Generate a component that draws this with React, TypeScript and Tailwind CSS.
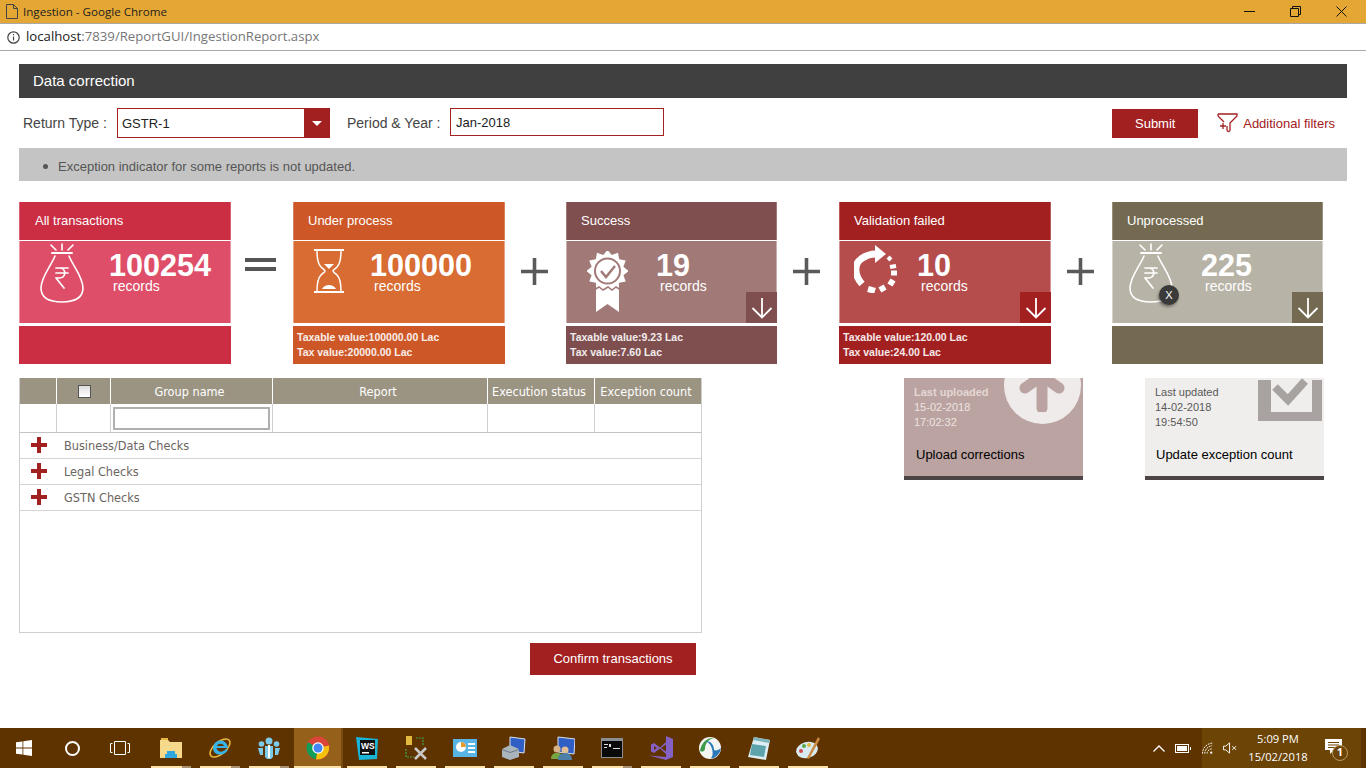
import { useState } from "react";

const arial = "font-['Liberation_Sans',Arial,sans-serif]";
const tahoma = "font-['DejaVu_Sans_Condensed','DejaVu_Sans',sans-serif]";
const segoe = "font-['Open_Sans','Noto_Sans',sans-serif]";

function BagIcon() {
  return (
    <svg width="44" height="60" viewBox="0 0 44 60" fill="none" stroke="white" strokeWidth="1.6" strokeLinecap="round">
      <path d="M11 2l5 5M22 1v6M33 2l-5 5" />
      <path d="M12 10h20" strokeWidth="2" />
      <path d="M15 13C11 23 1 34 1 45c0 10 9 14 21 14s21-4 21-14c0-11-10-22-14-32" />
      <path d="M16 25h12M16 30h12M16 35h3.5c7 0 7-10 0-10M16 35l8 10" strokeWidth="1.7" />
    </svg>
  );
}

function HourglassIcon() {
  return (
    <svg width="32" height="46" viewBox="0 0 32 46" fill="none" stroke="white" strokeWidth="1.5">
      <path d="M1 2h30M1 44h30" strokeWidth="2" />
      <path d="M4 3c0 9 1 13 4 16 2 2 4 3 4 4s-2 2-4 4c-3 3-4 7-4 16M28 3c0 9-1 13-4 16-2 2-4 3-4 4s2 2 4 4c3 3 4 7 4 16" />
      <path d="M11 16h10l-5 5z" fill="white" stroke="none" />
      <path d="M9 41c2-3 4-4 7-4s5 1 7 4z" fill="white" stroke="none" />
    </svg>
  );
}

function burst(cx: number, cy: number, r1: number, r2: number, n: number) {
  const pts: string[] = [];
  for (let i = 0; i < n * 2; i++) {
    const a = (Math.PI * i) / n - Math.PI / 2;
    const r = i % 2 ? r2 : r1;
    pts.push(`${(cx + r * Math.cos(a)).toFixed(1)},${(cy + r * Math.sin(a)).toFixed(1)}`);
  }
  return pts.join(" ");
}

function MedalIcon() {
  return (
    <svg width="41" height="62" viewBox="0 0 41 62">
      <path d="M9 34h23v27l-11.500-8L9 61z" fill="white" />
      <polygon points={burst(20.5, 20, 21, 16.5, 12)} fill="white" />
      <path d="M7 39l5-3 4 3 5-3 4 3 4-3 5 3" fill="none" stroke="#A17A78" strokeWidth="1.5" />
      <circle cx="20.5" cy="20" r="12.5" fill="none" stroke="#A17A78" strokeWidth="2" />
      <path d="M14 20l5 6 9-11" fill="none" stroke="#A17A78" strokeWidth="2.5" />
    </svg>
  );
}

function ProgressIcon() {
  return (
    <svg width="44" height="48" viewBox="0 0 44 48" fill="none" stroke="white" strokeWidth="7">
      <path d="M8 39C0 30 0 19 7 14c4-3 8-5 15-5" />
      <path d="M21 0l11 9-11 9z" fill="white" stroke="none" />
      <path d="M34 15l3-3" strokeWidth="4" />
      <path d="M36 22l6-1" strokeWidth="4" />
      <path d="M37 28h6" strokeWidth="5" />
      <path d="M35 36l5 3" strokeWidth="6" />
      <path d="M27 41l3 5" strokeWidth="6" />
      <path d="M14 44l7 2" strokeWidth="6" />
    </svg>
  );
}

function ArrowBox({ bg }: { bg: string }) {
  return (
    <div className={`absolute right-0 bottom-0 flex h-[31px] w-[31px] items-center justify-center ${bg}`}>
      <svg width="22" height="22" viewBox="0 0 22 22" fill="none" stroke="white" strokeWidth="1.8">
        <path d="M11 1v19M1.500 11l9.500 9.500 9.500-9.500" />
      </svg>
    </div>
  );
}

const cards = [
  {
    title: "All transactions", count: "100254", head: "bg-[#CB2D43]", body: "bg-[#DE4E69]", width: "w-[212px]", titlePad: "pl-[16px]",
    icon: <BagIcon />, iconBox: "w-[90px] pl-[21px] pt-[2px]", taxable: "", tax: "", arrow: false,
  },
  {
    title: "Under process", count: "100000", head: "bg-[#CD5726]", body: "bg-[#D86C33]", width: "w-[212px]", titlePad: "pl-[15px]",
    icon: <HourglassIcon />, iconBox: "w-[77px] pl-[20px] pt-[7px]", taxable: "Taxable value:100000.00 Lac", tax: "Tax value:20000.00 Lac", arrow: false,
  },
  {
    title: "Success", count: "19", head: "bg-[#7F4E4E]", body: "bg-[#A17A78]", width: "w-[211px]", titlePad: "pl-[15px]",
    icon: <MedalIcon />, iconBox: "w-[90px] pl-[21px] pt-[10px]", taxable: "Taxable value:9.23 Lac", tax: "Tax value:7.60 Lac", arrow: true,
  },
  {
    title: "Validation failed", count: "10", head: "bg-[#A32020]", body: "bg-[#B54D4D]", width: "w-[212px]", titlePad: "pl-[15px]",
    icon: <ProgressIcon />, iconBox: "w-[78px] pl-[15px] pt-[4px]", taxable: "Taxable value:120.00 Lac", tax: "Tax value:24.00 Lac", arrow: true,
  },
  {
    title: "Unprocessed", count: "225", head: "bg-[#736A51]", body: "bg-[#B8B3A7]", width: "w-[211px]", titlePad: "pl-[15px]",
    icon: <BagIcon />, iconBox: "w-[89px] pl-[17px] pt-[2px]", taxable: "", tax: "", arrow: true,
  },
];

function Card({ card }: { card: (typeof cards)[number] }) {
  return (
    <div className={`flex shrink-0 flex-col ${card.width}`}>
      <div className={`flex h-[38px] items-center text-[13px] text-white shadow-[inset_1px_0_0_#ffffff40,inset_-1px_0_0_#ffffff40] ${card.titlePad} ${card.head}`}>{card.title}</div>
      <div className="h-px bg-white/70" />
      <div className={`relative flex h-[82px] shadow-[inset_1px_0_0_#ffffff66,inset_-1px_0_0_#ffffff66] ${card.body}`}>
        <div className={`relative shrink-0 ${card.iconBox}`}>
          {card.icon}
          {card.title === "Unprocessed" && (
            <span className="absolute top-[44px] left-[47px] flex h-5 w-5 items-center justify-center rounded-full bg-[#3a3a3a] text-[11px] text-white shadow-[-1px_2px_3px_rgba(0,0,0,0.4)]">
              X
            </span>
          )}
        </div>
        <div className="pt-[11px] text-white">
          <div className="text-[30.6px] leading-[26px] font-bold">{card.count}</div>
          <div className="ml-[4px] text-[14px] leading-[16px]">records</div>
        </div>
        {card.arrow && <ArrowBox bg={card.head} />}
      </div>
      <div className={`mt-[3px] flex h-[38px] flex-col justify-center pl-[4px] text-[10.5px] leading-[15px] font-bold text-white/90 ${card.head}`}>
        <div>{card.taxable}</div>
        <div>{card.tax}</div>
      </div>
    </div>
  );
}

function PlusOp({ w }: { w: string }) {
  return (
    <div className={`flex h-[138px] shrink-0 items-center justify-center pr-[3px] ${w}`}>
      <svg width="27" height="27" viewBox="0 0 27 27" fill="#5a5a5a">
        <path d="M11.700 0h3.600v11.700H27v3.600H15.300V27h-3.600V15.300H0v-3.600h11.700z" />
      </svg>
    </div>
  );
}

function Funnel() {
  return (
    <svg width="21" height="20" viewBox="0 0 21 20" fill="none" stroke="#A32020" strokeWidth="1.3">
      <path d="M1 1h19v2l-7 7v7c0 2-3 2-3 0v-4" />
      <path d="M1 3l6 6M1 1v2M3 13h6M6 10v6" />
    </svg>
  );
}

const headers = ["", "", "Group name", "Report", "Execution status", "Exception count"];
const groups = ["Business/Data Checks", "Legal Checks", "GSTN Checks"];

function GridTable() {
  const [checked, setChecked] = useState(false);
  return (
    <div className={`h-[255px] w-[683px] shrink-0 border-r border-b border-l border-[#cfcfcf] text-[12.600px] ${tahoma}`}>
      <div className="grid h-[26px] grid-cols-[37px_54px_162px_215px_107px_1fr] bg-[#9C9483] text-white">
        {headers.map((h, i) => (
          <div key={i} className="flex items-center justify-center border-r border-white pt-[2px] pr-[4px] last:border-r-0">
            {i === 1 ? (
              <input
                type="checkbox"
                checked={checked}
                onChange={() => setChecked(!checked)}
                className="mb-[2px] ml-[5px] h-[13px] w-[13px] appearance-none border border-[#555] bg-gradient-to-b from-[#ddd] to-white"
              />
            ) : (
              h
            )}
          </div>
        ))}
      </div>
      <div className="grid h-[29px] grid-cols-[37px_54px_162px_215px_107px_1fr] border-b border-[#c4c4c4]">
        {headers.map((_, i) => (
          <div key={i} className="flex items-center justify-center border-r border-[#cfcfcf] last:border-r-0">
            {i === 2 && <input className="h-[23px] w-[157px] border-2 border-[#b0b0b0] bg-white" />}
          </div>
        ))}
      </div>
      {groups.map((g) => (
        <div key={g} className="flex h-[26px] items-center border-b border-[#d4d4d4] text-[#6b655f]">
          <svg width="16" height="16" viewBox="0 0 16 16" fill="#A32020" className="mr-[17px] mb-[2px] ml-[11px]">
            <path d="M6 0h4v6h6v4h-6v6H6v-6H0V6h6z" />
          </svg>
          <span className="pt-[1px]">{g}</span>
        </div>
      ))}
    </div>
  );
}

function UploadTile() {
  return (
    <div className="relative h-[102px] w-[179px] overflow-hidden border-b-4 border-[#4B4545] bg-[#BAA3A0]">
      <div className="absolute top-[-31px] left-[100px] h-[77px] w-[77px] rounded-full bg-[#EFEBEA]" />
      <svg width="56" height="34" viewBox="0 0 56 34" fill="none" stroke="#BAA3A0" strokeLinecap="round" className="absolute top-0 left-[110px]">
        <path d="M28 4v26" strokeWidth="11" />
        <path d="M11 10L28 -2 45 10" strokeWidth="11" />
      </svg>
      <div className="pt-[7px] pl-[10px] text-[11px] leading-[15px] text-[#EFE3E1]">
        <div className="font-bold opacity-80">Last uploaded</div>
        <div>15-02-2018</div>
        <div>17:02:32</div>
      </div>
      <div className="pt-[17px] pl-[12px] text-[13px] leading-[16px] text-black">Upload corrections</div>
    </div>
  );
}

function UpdateTile() {
  return (
    <div className="relative h-[102px] w-[179px] overflow-hidden border-b-4 border-[#4B4545] bg-[#EFEEEC]">
      <svg width="64" height="43" viewBox="0 0 64 43" className="absolute top-0 left-[113px]">
        <path d="M0 2h13v32h41V2h10v41H0z" fill="#A8A3A0" />
        <path d="M17 9l13 13 17-19" fill="none" stroke="#A8A3A0" strokeWidth="8" />
      </svg>
      <div className="pt-[7px] pl-[10px] text-[11px] leading-[15px] text-[#595959]">
        <div>Last updated</div>
        <div>14-02-2018</div>
        <div>19:54:50</div>
      </div>
      <div className="pt-[17px] pl-[11px] text-[13px] leading-[16px] text-black">Update exception count</div>
    </div>
  );
}

const slots: { kind: "open" | "split" | "active"; icon: React.ReactNode }[] = [
  {
    kind: "split",
    icon: (
      <svg width="22" height="20" viewBox="0 0 22 20">
        <path d="M0 2h8l2 2h12v16H0z" fill="#F6D98B" />
        <path d="M1 0h7v2H1z" fill="#E8B93F" />
        <path d="M7 13h8v3h2v4H5v-4h2z" fill="#31A7DF" />
      </svg>
    ),
  },
  {
    kind: "split",
    icon: (
      <svg width="24" height="24" viewBox="0 0 24 24" fill="none">
        <ellipse cx="12" cy="12" rx="12" ry="6" transform="rotate(-40 12 12)" stroke="#E8B93F" strokeWidth="1.5" />
        <path d="M5 12a7.500 7.500 0 0 1 15 0H8.500c.5 4 6 5 9 1.500h2.500C17 21 5 20 5 12zm4-2h7c-1-3-6-3-7 0z" fill="#36B4E8" fillRule="evenodd" />
      </svg>
    ),
  },
  {
    kind: "split",
    icon: (
      <svg width="24" height="24" viewBox="0 0 24 24" fill="#7CCBEA">
        <circle cx="12" cy="5" r="3.5" />
        <circle cx="4.5" cy="8" r="2.8" />
        <circle cx="19.5" cy="8" r="2.8" />
        <path d="M8 10h8v11l-2 2h-4l-2-2zM1 12h5v7H3zM18 12h5l-2 7h-3z" />
        <path d="M11 9h2v13h-2z" fill="#fff" />
      </svg>
    ),
  },
  {
    kind: "active",
    icon: (
      <svg width="24" height="24" viewBox="0 0 24 24">
        <circle cx="12" cy="12" r="11.5" fill="#DB4437" />
        <path d="M12 12L2 6.200A11.500 11.500 0 0 0 10 23.300z" fill="#0F9D58" />
        <path d="M12 12l10.800-2.500A11.500 11.500 0 0 1 10 23.300z" fill="#F4C20D" />
        <circle cx="12" cy="12" r="5.8" fill="#fff" />
        <circle cx="12" cy="12" r="4.5" fill="#4285F4" />
      </svg>
    ),
  },
  {
    kind: "open",
    icon: (
      <svg width="24" height="24" viewBox="0 0 24 24">
        <path d="M1 1l22 2-1 20-18 1z" fill="#19B5D8" />
        <path d="M5 4h15v15H5z" fill="#111" />
        <path d="M7 16h7v1.500H7z" fill="#fff" />
        <text x="6" y="13" fontSize="8.500" fontWeight="700" fill="#fff" fontFamily="Liberation Sans, sans-serif">WS</text>
      </svg>
    ),
  },
  {
    kind: "open",
    icon: (
      <svg width="24" height="24" viewBox="0 0 24 24" fill="none">
        <path d="M2 0h6v9H2z" fill="#E3B93F" />
        <path d="M12 2h7v7M2 13v8h8" stroke="#3FA34D" strokeWidth="1.2" strokeDasharray="2 1" />
        <path d="M11 12l11 11M22 12L11 23" stroke="#C9C9C9" strokeWidth="2.5" />
      </svg>
    ),
  },
  {
    kind: "open",
    icon: (
      <svg width="24" height="20" viewBox="0 0 24 20">
        <path d="M0 1h24v18H0z" fill="#59B4E6" />
        <circle cx="8" cy="9" r="5" fill="#fff" />
        <path d="M8 9V4a5 5 0 0 1 5 5z" fill="#E89B2C" />
        <path d="M15 5h7v2h-7zM15 9h7v2h-7zM15 13h7v2h-7z" fill="#fff" />
      </svg>
    ),
  },
  {
    kind: "open",
    icon: (
      <svg width="24" height="24" viewBox="0 0 24 24">
        <path d="M8 1l15 2-1 14-14-2z" fill="#2F5FC4" stroke="#D9E2EE" strokeWidth="1" />
        <path d="M0 13l8-4 9 4v8l-9 3-8-3z" fill="#A9B4BD" />
        <path d="M0 13l8 3 9-3v1l-9 3-8-3z" fill="#6F7B84" />
      </svg>
    ),
  },
  {
    kind: "open",
    icon: (
      <svg width="24" height="24" viewBox="0 0 24 24">
        <path d="M7 1l17 2-1 15-16-2z" fill="#2F5FC4" stroke="#D9E2EE" strokeWidth="1" />
        <circle cx="6" cy="13" r="3.5" fill="#D9B48A" />
        <path d="M0 23c0-5 3-6 6-6s6 1 6 6z" fill="#78A642" />
        <circle cx="14" cy="14" r="3.5" fill="#E3BE95" />
        <path d="M7 24c0-5 3-7 7-7s7 2 7 7z" fill="#4E7FA8" />
      </svg>
    ),
  },
  {
    kind: "split",
    icon: (
      <svg width="22" height="20" viewBox="0 0 22 20">
        <path d="M0 0h22v20H0z" fill="#8A8F93" />
        <path d="M1 3h20v16H1z" fill="#0A0A0A" />
        <path d="M3 6h4v1H3zM3 9h3v1H3zM8 6h2v3H8zM12 10h7v1h-7z" fill="#DDD" />
      </svg>
    ),
  },
  {
    kind: "open",
    icon: (
      <svg width="24" height="24" viewBox="0 0 24 24" fill="#8661C5" fillRule="evenodd">
        <path d="M17 0l7 3v18l-7 3L0 19.500 17 21zM17 6l-6 5.500L5 7 2 8.500v7L5 17l6-4.500 6 5.500zM5 10l3 2-3 2zM12 12l5-3.500v7z" />
      </svg>
    ),
  },
  {
    kind: "open",
    icon: (
      <svg width="24" height="24" viewBox="0 0 24 24" fill="none">
        <circle cx="12" cy="12" r="11" fill="#F2F5F2" />
        <path d="M2 15C3 7 9 1 16 2c-5 1-9 5-9 11-1 3-3 3-5 2z" fill="#3F9A4B" />
        <path d="M8 5c5 0 8 4 8 9 2 1 5 0 7-2-1 6-6 11-10 10 2-2 2-6 1-9-1-4-3-6-6-8z" fill="#2B78B8" />
      </svg>
    ),
  },
  {
    kind: "open",
    icon: (
      <svg width="22" height="24" viewBox="0 0 22 24">
        <path d="M6 1l16 3-4 20-18-3z" fill="#DCEEF1" />
        <path d="M6 1l16 3-1 3L5 4z" fill="#7FB4BD" />
        <path d="M4 8l14 2-2 11-14-2z" fill="#5DA3AC" />
      </svg>
    ),
  },
  {
    kind: "open",
    icon: (
      <svg width="24" height="24" viewBox="0 0 24 24">
        <ellipse cx="11" cy="14" rx="11" ry="8" fill="#D8EAF2" transform="rotate(-15 11 14)" />
        <circle cx="5" cy="15" r="2" fill="#D24B4B" />
        <circle cx="8" cy="10" r="2" fill="#5BA84B" />
        <circle cx="13" cy="9" r="2" fill="#E8B93F" />
        <path d="M22 1l2 2-11 20-2-1z" fill="#C98A3F" />
      </svg>
    ),
  },
];

function Taskbar() {
  return (
    <div className={`flex h-[40px] shrink-0 items-stretch bg-[#5F3300] text-white ${segoe}`}>
      <div className="flex w-[48px] items-center justify-center">
        <svg width="16" height="16" viewBox="0 0 16 16" fill="white">
          <path d="M0 2.300l6.500-.9v6.200H0zM7.300 1.300L16 0v7.600H7.300zM0 8.400h6.500v6.200L0 13.700zM7.300 8.400H16V16l-8.700-1.300z" />
        </svg>
      </div>
      <div className="flex w-[48px] items-center justify-center">
        <div className="h-[15px] w-[15px] rounded-full border-2 border-white" />
      </div>
      <div className="mr-[3px] flex w-[48px] items-center justify-center">
        <svg width="20" height="14" viewBox="0 0 20 14" fill="none" stroke="white" strokeWidth="1">
          <path d="M4.500.5h11v13h-11zM2.500 2.500h-2v9h2M17.500 2.500h2v9h-2" />
        </svg>
      </div>
      {slots.map((s, i) => (
        <div
          key={i}
          className={`relative mr-px flex w-[48px] items-center justify-center ${s.kind === "active" ? "bg-[#95601A]" : ""}`}
        >
          {s.icon}
          {s.kind === "active" ? (
            <div className="absolute right-0 bottom-0 left-0 h-[2px] bg-[#FBE0A8]" />
          ) : (
            <div className="absolute right-[4px] bottom-0 left-[4px] h-[2px] bg-[#FBE0A8]" />
          )}
          {s.kind === "split" && <div className="absolute right-[4px] bottom-0 h-[2px] w-[9px] bg-[#A89272]" />}
          {s.kind === "active" && <div className="absolute top-0 right-[-1px] bottom-0 w-[2px] bg-[#7A4C12]" />}
        </div>
      ))}
      <div className="ml-auto flex items-center">
        <svg width="12" height="7" viewBox="0 0 12 7" fill="none" stroke="white" strokeWidth="1.3" className="mr-[10px]">
          <path d="M.5 6.500L6 1l5.500 5.500" />
        </svg>
        <svg width="16" height="9" viewBox="0 0 16 9" fill="white" className="mr-[11px]">
          <path d="M0 0h14v9H0zM1 1v7h12V1zM2 2h10v5H2zM15 3h1v3h-1z" fillRule="evenodd" />
        </svg>
        <div className="flex h-full items-center bg-[#6B4406]">
          <svg width="12" height="13" viewBox="0 0 13 13" fill="none" stroke="white" strokeWidth="1" className="mr-[9px]">
            <path d="M.5 12C.5 6 5 1 12 .5M3 12c0-4 3-8 8-8.500M5.500 12c0-2.500 2-5 5-5" strokeDasharray="2 1" />
            <circle cx="10" cy="11" r="1.2" fill="white" stroke="none" />
          </svg>
          <svg width="14" height="12" viewBox="0 0 15 12" fill="none" stroke="white" strokeWidth="1">
            <path d="M.5 4h2.500l4-3.500v11L3 8H.5zM10 4l4 4M14 4l-4 4" />
          </svg>
          <div className="w-[82px] text-center text-[11.200px] leading-[18px]">
            <div>5:09 PM</div>
            <div>15/02/2018</div>
          </div>
          <div className="relative mr-[19px] ml-[6px] w-[17px]">
            <svg width="17" height="15" viewBox="0 0 17 15" fill="white" className="mt-[-4px]">
              <path d="M0 0h17v11h-8l-4 4v-4H0z" />
              <path d="M3 3h11v1H3zM3 5.500h11v1H3zM3 8h7v1H3z" fill="#6B4406" />
            </svg>
            <span className="absolute top-[2px] left-[7px] flex h-[16px] w-[16px] items-center justify-center rounded-full border border-[#B79A66] bg-[#6B4406] text-[11px] font-bold">
              1
            </span>
          </div>
        </div>
        <div className="w-[5px]" />
      </div>
    </div>
  );
}

export default function App() {
  return (
    <div className={`flex h-screen w-[1366px] flex-col overflow-hidden bg-white ${arial}`}>
      <div className={`flex h-[24px] shrink-0 items-center border-b border-[#A9A9A9] bg-[#E5A733] pl-[6px] text-[11.600px] text-[#222] ${segoe}`}>
        <svg width="12" height="15" viewBox="0 0 12 15" fill="none" stroke="#444" strokeWidth="1" className="mr-[5px]">
          <path d="M.5.500h7l4 4v10H.500zM7.500.500v4h4" />
        </svg>
        Ingestion - Google Chrome
        <div className="ml-auto flex items-center">
          <svg width="11" height="11" viewBox="0 0 11 11" stroke="#111" fill="none" className="mr-[35px]"><path d="M0 5.500h11" /></svg>
          <svg width="11" height="11" viewBox="0 0 11 11" stroke="#111" fill="none" className="mr-[35px]"><path d="M.5 2.500h8v8h-8zM2.500 2.500v-2h8v8h-2" /></svg>
          <svg width="11" height="11" viewBox="0 0 11 11" stroke="#111" fill="none" className="mr-[19px]"><path d="M.5.500l10 10M10.500.500l-10 10" /></svg>
        </div>
      </div>
      <div className={`flex h-[27px] shrink-0 items-center border-b border-[#A9A9A9] pl-[7px] text-[13.200px] text-[#777] ${segoe}`}>
        <svg width="13" height="13" viewBox="0 0 13 13" fill="none" stroke="#444" strokeWidth="1.2" className="mr-[6px]">
          <circle cx="6.500" cy="6.500" r="5.700" />
          <path d="M6.500 5.500v4M6.500 3v1.300" />
        </svg>
        <span className="text-[#222]">localhost</span>:7839/ReportGUI/IngestionReport.aspx
      </div>

      <main className="flex-1 px-[19px] pt-[13px]">
        <div className="flex h-[34px] items-center bg-[#404040] pt-[1px] pl-[14px] text-[15px] text-white">Data correction</div>

        <div className="flex h-[50px] items-center pl-[4px] text-[14px] text-[#444]">
          <span className="w-[94px]">Return Type :</span>
          <div className="flex h-[30px] w-[213px] items-stretch border border-r-0 border-[#A32020] text-[13px] text-[#222]">
            <span className="flex flex-1 items-center pt-[1px] pl-[4px]">GSTR-1</span>
            <span className="flex w-[26px] items-center justify-center bg-[#A32020]">
              <span className="h-0 w-0 border-x-[5px] border-t-[5px] border-x-transparent border-t-white" />
            </span>
          </div>
          <span className="ml-[17px] w-[103px]">Period &amp; Year :</span>
          <div className="mb-[2px] flex h-[28px] w-[214px] items-center border border-[#A32020] pt-[1px] pl-[5px] text-[13px] text-[#222]">Jan-2018</div>
          <button className="ml-auto h-[29px] w-[86px] bg-[#A32020] pt-[1px] text-[13px] text-white">Submit</button>
          <div className="mr-[12px] ml-[19px] flex items-center gap-[5px] text-[13px] text-[#A32020]">
            <Funnel />
            <span className="pt-[1px]">Additional filters</span>
          </div>
        </div>

        <div className="flex h-[33px] items-center bg-[#C4C4C4] pt-[4px] pl-[24px] text-[13px] text-[#555]">
          <span className="mr-[10px] h-[5px] w-[5px] rounded-full bg-[#555]" />
          Exception indicator for some reports is not updated.
        </div>

        <div className="mt-[21px] flex">
          <Card card={cards[0]} />
          <div className="flex h-[125px] w-[62px] shrink-0 flex-col items-center justify-center gap-[5px] pr-[3px]">
            <div className="h-[4px] w-[31px] bg-[#555]" />
            <div className="h-[4px] w-[31px] bg-[#555]" />
          </div>
          <Card card={cards[1]} />
          <PlusOp w="w-[61px]" />
          <Card card={cards[2]} />
          <PlusOp w="w-[62px]" />
          <Card card={cards[3]} />
          <PlusOp w="w-[61px]" />
          <Card card={cards[4]} />
        </div>

        <div className="mt-[14px] flex">
          <GridTable />
          <div className="ml-[202px] flex gap-[62px]">
            <UploadTile />
            <UpdateTile />
          </div>
        </div>

        <button className="mt-[10px] ml-[511px] h-[32px] w-[166px] bg-[#A32020] text-[13px] text-white">Confirm transactions</button>
      </main>

      <Taskbar />
    </div>
  );
}
